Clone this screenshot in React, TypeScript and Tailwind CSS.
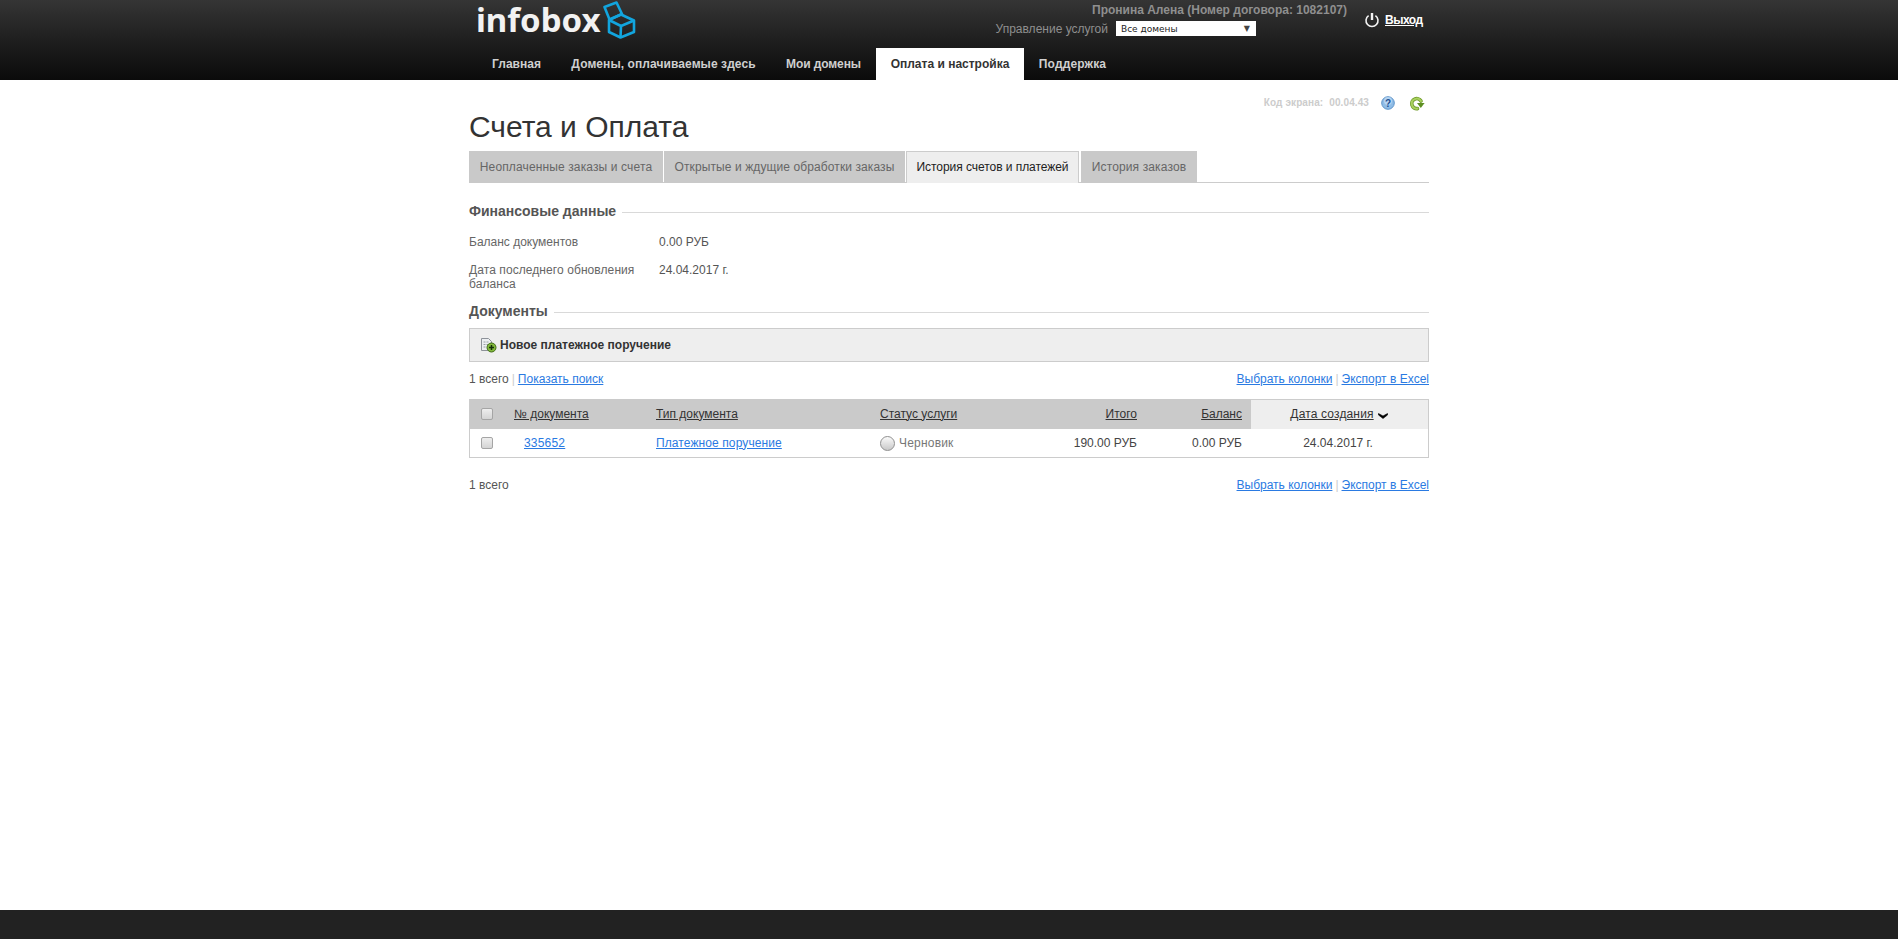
import React from "react";

const NAV = [
  { label: "Главная", width: "w-[79px]" },
  { label: "Домены, оплачиваемые здесь", width: "w-[215px] tracking-[0.08px]" },
  { label: "Мои домены", width: "w-[105px] tracking-[-0.1px]" },
  { label: "Оплата и настройка", width: "w-[148px]", active: true },
  { label: "Поддержка", width: "w-[97px] tracking-[0.15px]" },
];
const TABS = [
  { label: "Неоплаченные заказы и счета", cls: "w-[194px] tracking-[0.13px] bg-[#c9c9c9] text-[#666666]" },
  { label: "Открытые и ждущие обработки заказы", cls: "w-[241px] tracking-[0.1px] bg-[#c9c9c9] text-[#666666]" },
  { label: "История счетов и платежей", cls: "w-[173px] pb-[1px] bg-[#eeeeee] border border-[#cccccc] border-b-0 text-[#222222] tracking-[-0.05px]" },
  { label: "История заказов", cls: "w-[116px] ml-[1px] tracking-[0.13px] bg-[#c9c9c9] text-[#666666]" },
];
const link = "text-[#2a7ae2] underline";
const grid = "grid grid-cols-[36px_142px_224px_168px_106px_105px_1fr]";

function CubeLogo() {
  return (
    <svg width="36" height="38" viewBox="0 0 36 38" fill="none" stroke="#12a5de" strokeWidth="2.6" strokeLinejoin="round" className="ml-[2px] mt-[1px]">
      <path d="M18 13.5 31 19.5 V31 L17.5 36.5 6 31 V19 Z" />
      <path d="M6 19 18 25 31 19.5 M18 25 17.5 36.5" />
      <path d="M1.5 6 13.5 1.5 19 13 6.5 18.5 Z" />
    </svg>
  );
}

function Checkbox() {
  return <span className="block w-[12px] h-[12px] rounded-[2px] border border-[#a5a5a5] bg-linear-to-b from-[#eeeeee] to-[#d4d4d4]" />;
}

function HelpIcon() {
  return (
    <svg width="14" height="14" viewBox="0 0 14 14">
      <circle cx="7" cy="7" r="6.3" fill="#8fbce6" stroke="#5f94c9" />
      <circle cx="7" cy="5" r="4" fill="#c4def5" opacity="0.7" />
      <text x="7" y="10.5" textAnchor="middle" fontSize="10" fontWeight="700" fontFamily="Liberation Sans" fill="#1d4f91">?</text>
    </svg>
  );
}

function RefreshIcon() {
  return (
    <svg width="16" height="15" viewBox="0 0 16 15" fill="none">
      <path d="M12 5A5 5 0 1 0 8.5 12.6" stroke="#6f9a2a" strokeWidth="3.6" strokeLinecap="round" />
      <path d="M12 5A5 5 0 1 0 8.5 12.6" stroke="#a9d15f" strokeWidth="2" strokeLinecap="round" />
      <path d="M8 7h7.6l-3.8 5z" fill="#5e8f22" />
    </svg>
  );
}

function NewDocIcon() {
  return (
    <svg width="17" height="16" viewBox="0 0 17 16">
      <path d="M1.5 1.5h7l3 3v9h-10z" fill="#eceff2" stroke="#8d9299" />
      <path d="M3.5 5h2M6.5 5h2M3.5 7.5h2M6.5 7.5h2M3.5 10h2" stroke="#9aa0a8" />
      <circle cx="11.5" cy="10.5" r="4.5" fill="#82b83c" stroke="#3f6b16" />
      <path d="M11.5 8v5M9 10.5h5" stroke="#14300a" strokeWidth="1.5" />
    </svg>
  );
}

function PowerIcon() {
  return (
    <svg width="16" height="16" viewBox="0 0 16 16" fill="none" stroke="#f2f2f2" strokeWidth="1.6">
      <path d="M4.6 3.6a6 6 0 1 0 6.8 0" />
      <path d="M8 1v7" strokeWidth="2.4" />
    </svg>
  );
}

function SortArrow() {
  return (
    <svg width="10" height="6" viewBox="0 0 10 6" className="ml-[4px] mt-[3px]">
      <path d="M0.5 0.5 5 3 9.5 0.5 V2 L5 5.5 0.5 2Z" fill="#000" stroke="#000" strokeWidth="0.6" />
    </svg>
  );
}

function SectionTitle({ children }: { children: React.ReactNode }) {
  return (
    <div className="flex items-center h-[16px]">
      <h2 className="text-[14px] font-bold text-[#555555] leading-[16px]">{children}</h2>
      <div className="flex-1 h-px bg-[#d9d9d9] ml-[6px] mt-[2px]" />
    </div>
  );
}

function Links() {
  return (
    <div>
      <a className={link}>Выбрать колонки</a>
      <span className="text-[#cccccc] mx-[3px]">|</span>
      <a className={link}>Экспорт в Excel</a>
    </div>
  );
}

export default function App() {
  return (
    <div className="min-h-screen flex flex-col bg-white text-[12px] leading-[14px] text-[#555555] font-['Liberation_Sans',Arial,sans-serif]">
      <header className="h-[80px] bg-linear-to-b from-[#353535] to-[#0b0b0b]">
        <div className="w-[960px] mx-auto h-full flex flex-col">
          <div className="h-[48px] flex">
            <div className="flex items-start pl-[7px] w-[526px]">
              <span className="font-['Noto_Sans',sans-serif] font-bold text-[33px] leading-[42px] text-[#f2f2f2] mt-[-1px]">infobox</span>
              <CubeLogo />
            </div>
            <div className="w-[352px] flex flex-col items-end">
              <div className="font-bold text-[#8f8f8f] mt-[3px]">Пронина Алена (Номер договора: 1082107)</div>
              <div className="flex items-center mt-[4px] w-full justify-end pr-[91px]">
                <span className="text-[#8f8f8f]">Управление услугой</span>
                <div className="ml-[8px] w-[140px] h-[15px] bg-white flex items-center justify-between pl-[5px] pr-[6px] text-[#222222] text-[9px] font-['DejaVu_Sans',sans-serif]">
                  <span>Все домены</span>
                  <span className="text-[#444444] text-[8px]">▼</span>
                </div>
              </div>
            </div>
            <div className="flex-1 flex items-start pl-[17px] pt-[12px]">
              <PowerIcon />
              <a className="ml-[5px] mt-[1px] font-bold text-white underline tracking-[-0.5px]">Выход</a>
            </div>
          </div>
          <nav className="h-[32px] flex pl-[8px]">
            {NAV.map((n) => (
              <a key={n.label} className={`h-full flex items-center justify-center font-bold ${n.width} ${n.active ? "bg-white text-[#333333]" : "text-[#cfcfcf]"}`}>{n.label}</a>
            ))}
          </nav>
        </div>
      </header>

      <main className="w-[960px] mx-auto flex-1">
        <div className="h-[16px] mt-[15px] flex items-center justify-end text-[10px] text-[#cccccc] pr-[4px] tracking-[0.1px]">
          <span className="font-bold">Код экрана:</span>
          <span className="font-bold ml-[6px]">00.04.43</span>
          <span className="ml-[12px]"><HelpIcon /></span>
          <span className="ml-[14px]"><RefreshIcon /></span>
        </div>
        <h1 className="text-[30px] leading-[34px] text-[#333333] mt-[-1px] font-normal">Счета и Оплата</h1>
        <div className="flex mt-[7px] h-[32px] border-b border-[#cccccc] gap-[1px]">
          {TABS.map((t) => (
            <div key={t.label} className={`h-[32px] flex items-center justify-center ${t.cls}`}>{t.label}</div>
          ))}
        </div>

        <div className="mt-[20px]"><SectionTitle>Финансовые данные</SectionTitle></div>
        <div className="flex mt-[16px]">
          <div className="w-[190px] text-[#666666]">Баланс документов</div>
          <div className="text-[#555555]">0.00 РУБ</div>
        </div>
        <div className="flex mt-[14px]">
          <div className="w-[190px] text-[#666666] tracking-[0.08px]">Дата последнего обновления баланса</div>
          <div className="text-[#555555]">24.04.2017 г.</div>
        </div>
        <div className="mt-[12px]"><SectionTitle>Документы</SectionTitle></div>

        <div className="mt-[9px] h-[34px] border border-[#cccccc] bg-[#eeeeee] flex items-center pl-[10px] font-bold text-[#333333]">
          <NewDocIcon />
          <span className="ml-[3px]">Новое платежное поручение</span>
        </div>

        <div className="flex justify-between mt-[10px] h-[14px]">
          <div>
            <span className="text-[#555555]">1 всего</span>
            <span className="text-[#cccccc] mx-[3px]">|</span>
            <a className={link}>Показать поиск</a>
          </div>
          <Links />
        </div>

        <div className="mt-[13px] border border-[#cccccc] border-t-0">
          <div className={`${grid} h-[30px] items-stretch bg-[#cacaca] text-[#333333] underline`}>
            <div className="flex items-center justify-center pr-[2px]"><Checkbox /></div>
            <div className="flex items-center pl-[8px] pb-[1px]"><a>№ документа</a></div>
            <div className="flex items-center pl-[8px] pb-[1px]"><a>Тип документа</a></div>
            <div className="flex items-center pl-[8px] pb-[1px]"><a>Статус услуги</a></div>
            <div className="flex items-center justify-end pr-[9px] pb-[1px]"><a>Итого</a></div>
            <div className="flex items-center justify-end pr-[9px] pb-[1px]"><a>Баланс</a></div>
            <div className="flex items-center justify-center bg-[#eeeeee] border-t border-[#cccccc] pl-[1px] pr-[2px] pb-[1px]"><a className="tracking-[0.15px]">Дата создания</a><SortArrow /></div>
          </div>
          <div className={`${grid} h-[28px] items-center text-[#444444] pb-[1px]`}>
            <div className="flex justify-center pr-[2px]"><Checkbox /></div>
            <div className="pl-[18px]"><a className={`${link} tracking-[0.2px]`}>335652</a></div>
            <div className="pl-[8px]"><a className={`${link} tracking-[0.1px]`}>Платежное поручение</a></div>
            <div className="pl-[8px] flex items-center text-[#777777] tracking-[0.2px]">
              <span className="w-[15px] h-[15px] rounded-full border border-[#8f8f8f] bg-linear-to-b from-[#fafafa] to-[#c9c9c9] mr-[4px] mt-[1px]" />
              Черновик
            </div>
            <div className="text-right pr-[9px]">190.00 РУБ</div>
            <div className="text-right pr-[9px]">0.00 РУБ</div>
            <div className="text-center pr-[3px]">24.04.2017 г.</div>
          </div>
        </div>

        <div className="flex justify-between mt-[20px] h-[14px]">
          <span className="text-[#555555]">1 всего</span>
          <Links />
        </div>
      </main>

      <footer className="h-[29px] bg-[#222222]" />
    </div>
  );
}
